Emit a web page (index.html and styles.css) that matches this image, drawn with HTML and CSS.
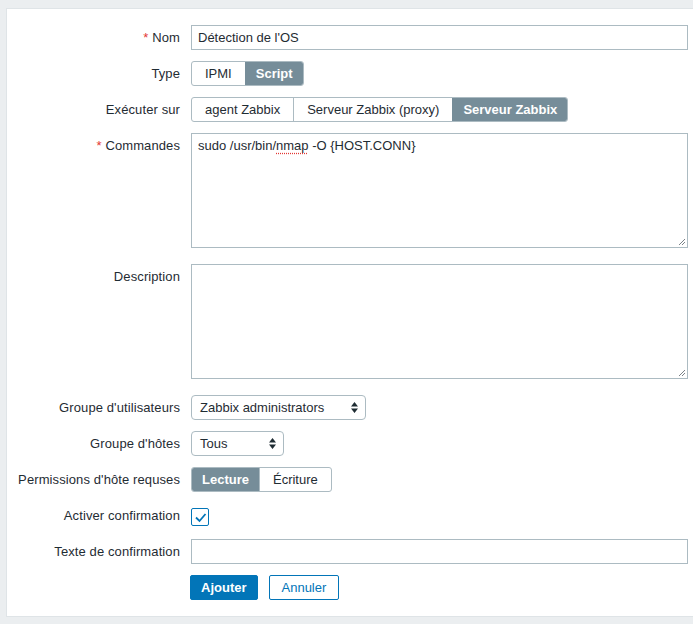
FILE: index.html
```html
<!DOCTYPE html>
<html lang="fr">
<head>
<meta charset="utf-8">
<title>Script</title>
<link rel="stylesheet" href="styles.css">
</head>
<body>
<div class="panel">
  <div class="form">
    <div class="row">
      <div class="label"><span class="req">*</span> Nom</div>
      <div class="control"><div class="input wide">Détection de l'OS</div></div>
    </div>
    <div class="row">
      <div class="label">Type</div>
      <div class="control">
        <div class="seg"><span class="seg-item">IPMI</span><span class="seg-item on">Script</span></div>
      </div>
    </div>
    <div class="row">
      <div class="label">Exécuter sur</div>
      <div class="control">
        <div class="seg"><span class="seg-item">agent Zabbix</span><span class="seg-item">Serveur Zabbix (proxy)</span><span class="seg-item on">Serveur Zabbix</span></div>
      </div>
    </div>
    <div class="row tall">
      <div class="label"><span class="req">*</span> Commandes</div>
      <div class="control">
        <div class="textarea">sudo /usr/bin/<span class="spell">nmap</span> -O {HOST.CONN}<svg class="grip" width="8" height="8" viewBox="0 0 8 8"><path d="M7 1L1 7M7 4L4 7" stroke="#7b8288" stroke-width="1" fill="none"/></svg></div>
      </div>
    </div>
    <div class="row tall">
      <div class="label">Description</div>
      <div class="control">
        <div class="textarea"><svg class="grip" width="8" height="8" viewBox="0 0 8 8"><path d="M7 1L1 7M7 4L4 7" stroke="#7b8288" stroke-width="1" fill="none"/></svg></div>
      </div>
    </div>
    <div class="row">
      <div class="label">Groupe d'utilisateurs</div>
      <div class="control">
        <div class="select users">Zabbix administrators<svg class="arrows" width="7" height="11" viewBox="0 0 7 11"><path d="M3.5 0L7 4.5H0Z M3.5 11L7 6.5H0Z" fill="#1f2c33"/></svg></div>
      </div>
    </div>
    <div class="row">
      <div class="label">Groupe d'hôtes</div>
      <div class="control">
        <div class="select hosts">Tous<svg class="arrows" width="7" height="11" viewBox="0 0 7 11"><path d="M3.5 0L7 4.5H0Z M3.5 11L7 6.5H0Z" fill="#1f2c33"/></svg></div>
      </div>
    </div>
    <div class="row">
      <div class="label">Permissions d'hôte requses</div>
      <div class="control">
        <div class="seg"><span class="seg-item on">Lecture</span><span class="seg-item">Écriture</span></div>
      </div>
    </div>
    <div class="row">
      <div class="label">Activer confirmation</div>
      <div class="control">
        <div class="checkbox"><svg width="13" height="11" viewBox="0 0 13 11"><path d="M2 5.5L5.5 9L11.5 2" stroke="#0275b8" stroke-width="1.8" fill="none"/></svg></div>
      </div>
    </div>
    <div class="row">
      <div class="label">Texte de confirmation</div>
      <div class="control"><div class="input wide"></div></div>
    </div>
    <div class="row">
      <div class="label"></div>
      <div class="control buttons">
        <span class="btn primary">Ajouter</span>
        <span class="btn alt">Annuler</span>
      </div>
    </div>
  </div>
</div>
</body>
</html>
```

FILE: styles.css
```css
html, body {
  margin: 0;
  padding: 0;
}
body {
  background: #ebeef0;
  font-family: "Liberation Sans", Arial, sans-serif;
  font-size: 13px;
  color: #1f2c33;
  overflow: hidden;
  width: 693px;
  height: 624px;
}
.panel {
  margin: 8px 0 0 6px;
  width: 720px;
  background: #fff;
  border: 1px solid #dfe4e7;
  padding: 16px 0 16px 0;
  box-sizing: border-box;
}
.form {
  display: flex;
  flex-direction: column;
  gap: 11px;
}
.row {
  display: flex;
  align-items: flex-start;
  gap: 11px;
}
.row.tall {
  padding-bottom: 5px;
}
.label {
  width: 173px;
  flex: none;
  text-align: right;
  line-height: 25px;
  height: 25px;
  white-space: nowrap;
  letter-spacing: 0.1px;
}
.req {
  color: #e33734;
}
.control {
  display: flex;
  align-items: center;
  min-height: 25px;
}
.input {
  box-sizing: border-box;
  height: 25px;
  border: 1px solid #acbbc2;
  padding: 0 6px;
  line-height: 23px;
}
.input.wide {
  width: 497px;
}
.seg {
  display: flex;
  border: 1px solid #acbbc2;
  border-radius: 3px;
  overflow: hidden;
  height: 25px;
  box-sizing: border-box;
}
.seg-item {
  padding: 0 13px;
  line-height: 23px;
  border-left: 1px solid #acbbc2;
  white-space: nowrap;
}
.seg-item:first-child {
  border-left: none;
}
.seg-item.on {
  padding: 0 10px;
  background: #768d99;
  border-left-color: #768d99;
  color: #fff;
  font-weight: bold;
}
.textarea {
  position: relative;
  box-sizing: border-box;
  width: 497px;
  height: 115px;
  border: 1px solid #acbbc2;
  padding: 4px 6px;
  line-height: 16px;
}
.spell {
  text-decoration: underline dotted #e33734;
  text-underline-offset: 3px;
}
.grip {
  position: absolute;
  right: 1px;
  bottom: 1px;
}
.select {
  position: relative;
  box-sizing: border-box;
  height: 25px;
  border: 1px solid #acbbc2;
  border-radius: 4px;
  padding: 0 8px;
  line-height: 23px;
}
.select.users {
  width: 175px;
}
.select.hosts {
  width: 93px;
}
.arrows {
  position: absolute;
  right: 7px;
  top: 6px;
}
.checkbox {
  box-sizing: border-box;
  width: 18px;
  height: 18px;
  border: 1px solid #0275b8;
  border-radius: 2px;
  display: flex;
  align-items: center;
  justify-content: center;
  margin-top: 3px;
}
.buttons {
  gap: 11px;
  margin-left: -1px;
}
.btn {
  box-sizing: border-box;
  height: 25px;
  line-height: 23px;
  padding: 0 12px;
  border-radius: 2px;
  border: 1px solid #0275b8;
}
.btn.primary {
  padding: 0 10px;
  background: #0275b8;
  color: #fff;
  font-weight: bold;
}
.btn.alt {
  background: #fff;
  color: #0275b8;
}
```
